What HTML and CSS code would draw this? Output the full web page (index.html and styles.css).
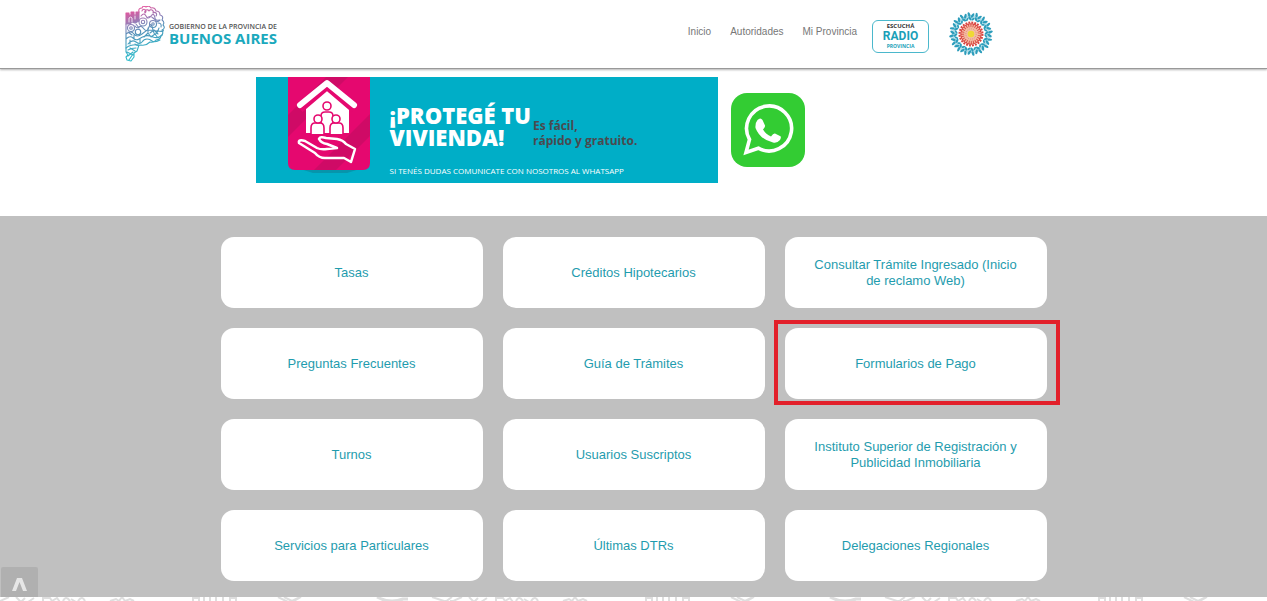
FILE: index.html
```
<!DOCTYPE html>
<html lang="es">
<head>
  <meta charset="UTF-8">
  <meta name="viewport" content="width=device-width, initial-scale=1.0">
  <title>Registro de la Propiedad - Provincia de Buenos Aires</title>
  <link rel="stylesheet" href="styles.css">
</head>
<body>
  <header class="header">
    <div class="header-inner">
      <a class="brand" href="#">
        <svg class="brand-map" width="40" height="56" viewBox="0 0 40 56" fill="none" stroke="url(#brandGrad)" stroke-width="1.1" stroke-linecap="round" stroke-linejoin="round" aria-hidden="true">
          <defs>
            <linearGradient id="brandGrad" gradientUnits="userSpaceOnUse" x1="6" y1="4" x2="20" y2="48">
              <stop offset="0" stop-color="#e5559d"/>
              <stop offset=".3" stop-color="#9180b8"/>
              <stop offset=".5" stop-color="#5490b8"/>
              <stop offset="1" stop-color="#30bccb"/>
            </linearGradient>
          </defs>
          <!-- castle and coast -->
          <path fill="url(#brandGrad)" d="M1 7h3v2h2V6h3v3h2V6h3v9l-4 2-3-1-2 2H1z"/>
          <path stroke="#fff" stroke-width=".8" d="M4 16v-4q2-2 3 0v4M10 10v3"/>
          <path d="M14 6q-1-4 3-4 1-3 4-1 3-2 5 1 4-1 5 3 4 0 4 4 4 1 2 5 3 2 1 5 3 3-1 5 2 4-1 6-1 4-5 4-2 3-6 2-4 4-9 3-5 1-6-1"/>
          <!-- curls -->
          <path d="M17 5a2 2 0 1 1 3 2 2 2 0 1 1 4-2 2 2 0 1 1 4 2 2 2 0 1 1 3 3M16 10q3-4 5 0t5 0 4 2 5 2"/>
          <circle cx="6" cy="22" r="3.5"/><circle cx="6" cy="22" r="1.3"/>
          <circle cx="18" cy="16" r="4"/><circle cx="18" cy="16" r="1.7"/>
          <circle cx="28" cy="18" r="3.5"/><circle cx="28" cy="18" r="1.2"/>
          <circle cx="13" cy="26" r="2.7"/>
          <path d="M1 18v24M1 28q5-4 8 0t8 0 6-4 9 1 6-1M10 20q2 3 4 1t5 2 5-2 4 3 6-2M22 12q3-3 6 0t6 2M33 17q4 0 3 4M1 33q4-4 7-1t6 1 6-3 8 1 9-2M3 38q4-5 8-2t6 0 5-3 5 2 8-1M25 27l4-3 4 4M19 31l4-4 3 4 4-3 3 4M5 34v4M9 29v4M15 33v4M3 26l4 3M11 18l3 4M23 22v4"/>
          <!-- southern tip -->
          <path d="M1 42q5-4 13-3l-2 6-3 2v4l-3 4-4-1-1-3 2-2-2-3zM3 50l5-4M4 54l4-6M5 42l5 3M2 46l6 3M3 44q3-2 8-2"/>
        </svg>
        <span class="brand-text">
          <span class="brand-small">GOBIERNO DE LA PROVINCIA DE</span>
          <span class="brand-big">BUENOS AIRES</span>
        </span>
      </a>
      <nav class="nav">
        <a class="nav-link" href="#">Inicio</a>
        <a class="nav-link" href="#">Autoridades</a>
        <a class="nav-link" href="#">Mi Provincia</a>
        <a class="radio" href="#">
          <span class="radio-top">ESCUCHÁ</span>
          <span class="radio-mid">RADIO</span>
          <span class="radio-bottom">PROVINCIA</span>
        </a>
        <a class="emblem" href="#" aria-label="Escudo">
          <svg width="44" height="44" viewBox="-22 -22 44 44" aria-hidden="true">
            <defs>
              <g id="leaf" fill="#2d9dbb">
                <ellipse cx="-2" cy="-19.500" rx="1.200" ry="2.400" transform="rotate(-20 -2 -19.500)"/>
                <ellipse cx="1.600" cy="-18.500" rx="1.200" ry="2.600" transform="rotate(35 1.600 -18.500)"/>
                <ellipse cx="-1" cy="-15.500" rx="1.100" ry="2.200" transform="rotate(-40 -1 -15.500)"/>
                <ellipse cx="2" cy="-14.800" rx=".9" ry="1.800" transform="rotate(50 2 -14.800)"/>
              </g>
              <g id="leaves">
                <use href="#leaf"/>
                <use href="#leaf" transform="rotate(22.500)"/>
                <use href="#leaf" transform="rotate(45)"/>
                <use href="#leaf" transform="rotate(67.500)"/>
              </g>
            </defs>
            <circle r="17" fill="none" stroke="#b5dfe9" stroke-width="4"/>
            <use href="#leaves"/>
            <use href="#leaves" transform="rotate(90)"/>
            <use href="#leaves" transform="rotate(180)"/>
            <use href="#leaves" transform="rotate(270)"/>
            <circle r="13" fill="#fff"/>
            <circle r="11.500" fill="none" stroke="#d8443f" stroke-width="2" stroke-dasharray="1.900 1.110"/>
            <circle r="10.700" fill="#d8443f"/>
            <circle r="8" fill="none" stroke="#f3b8a0" stroke-width="3.500" stroke-dasharray="1.300 .8"/>
            <circle r="7" fill="#f3bda4"/>
            <circle r="5.200" fill="none" stroke="#e58c74" stroke-width="1" stroke-dasharray="1 1"/>
            <circle r="3.300" fill="#efd934"/>
          </svg>
        </a>
      </nav>
    </div>
  </header>

  <section class="promo">
    <a class="banner" href="#">
      <svg class="banner-icon" width="84" height="97" viewBox="0 0 84 97" aria-hidden="true">
        <path d="M10 91h66l-16 5H26z" fill="#0795ab"/>
        <path d="M1 0h82v86q0 7-7 7H8q-7 0-7-7z" fill="#e5086f"/>
        <path d="M1 38L39 0h22L1 60zM27 93L83 37v22L49 93z" fill="#cf0a66"/>
        <path d="M19 24L40 8l22 16v32H19z" fill="#fff"/>
        <path d="M13 32L40 9l27 23" fill="none" stroke="#e5086f" stroke-width="8"/>
        <path d="M13 28L40 6l27 22" fill="none" stroke="#fff" stroke-width="6" stroke-linecap="round" stroke-linejoin="round"/>
        <g fill="#fff" stroke="#e5086f" stroke-width="1.600">
          <path d="M34 46v-7q0-4 4-4h4q4 0 4 4v7"/>
          <circle cx="40" cy="29" r="4"/>
          <path d="M24 57v-6q0-5 4-5h5q4 0 4 5v6M43 57v-6q0-5 4-5h5q4 0 4 5v6"/>
          <circle cx="31" cy="42" r="4"/>
          <circle cx="49" cy="42" r="4"/>
        </g>
        <path d="M12 66q-1-4 6-2l12 7q4 2 10 1l10-1-10-4q-6-1-8-5 1-3 7-1l11 1q6 1 9 5l9 5-4 13-7-4H38q-6 0-10-5z" fill="none" stroke="#fff" stroke-width="2.500" stroke-linejoin="round"/>
      </svg>
      <span class="banner-main">
        <span class="banner-row">
          <strong class="banner-title">¡PROTEGÉ TU<br>VIVIENDA!</strong>
          <span class="banner-aside">Es fácil,<br>rápido y gratuito.</span>
        </span>
        <span class="banner-note">SI TENÉS DUDAS COMUNICATE CON NOSOTROS AL WHATSAPP</span>
      </span>
    </a>
    <a class="whatsapp" href="#" aria-label="WhatsApp">
      <svg width="74" height="74" viewBox="0 0 74 74" aria-hidden="true">
        <rect width="74" height="74" rx="16" fill="#33cc33"/>
        <path d="M15 59.500l3.500-13a22.500 22.500 0 1 1 8.800 8.700z" fill="none" stroke="#fff" stroke-width="3.600"/>
        <path d="M26.500 27q3-3 5 0l2.500 5.500q.5 1.500-2 4 3 5 8 7 2.500-3.500 4-3l5.500 2.800q1 1-.5 3.700-3 3.500-7 2.500-13-3-17.500-14.500-.5-5 2-8z" fill="#fff"/>
      </svg>
    </a>
  </section>

  <main class="services">
    <div class="grid">
      <a class="tile" href="#">Tasas</a>
      <a class="tile" href="#">Créditos Hipotecarios</a>
      <a class="tile" href="#">Consultar Trámite Ingresado (Inicio de reclamo Web)</a>
      <a class="tile" href="#">Preguntas Frecuentes</a>
      <a class="tile" href="#">Guía de Trámites</a>
      <a class="tile tile-marked" href="#">Formularios de Pago</a>
      <a class="tile" href="#">Turnos</a>
      <a class="tile" href="#">Usuarios Suscriptos</a>
      <a class="tile" href="#">Instituto Superior de Registración y Publicidad Inmobiliaria</a>
      <a class="tile" href="#">Servicios para Particulares</a>
      <a class="tile" href="#">Últimas DTRs</a>
      <a class="tile" href="#">Delegaciones Regionales</a>
    </div>
    <button class="to-top" type="button" aria-label="Subir">
      <svg width="15" height="13" viewBox="0 0 15 13" aria-hidden="true">
        <path d="M0 13L5 0h5l5 13h-4L7.500 4 4 13z" fill="#e6e6e6"/>
      </svg>
    </button>
  </main>

  <footer class="footer">
    <svg class="footer-pattern" width="100%" height="5" aria-hidden="true">
      <defs>
        <pattern id="icons" width="453" height="5" patternUnits="userSpaceOnUse">
          <g fill="none" stroke="#dedede" stroke-width="2">
            <path d="M0 4l9-4M16 0l5 5 4-4M28 5l6-4M43 4V1h7l2 3 5-3 3 4M63 4q3-6 7 0M71 2l5 3M78 4q4-6 7 0"/>
            <path d="M110 4l6-2 3 2 3-4 3 4 5-2 4 2"/>
            <path d="M193 5V0M199 0v5M204 0v5M210 0v5M216 0v5M223 0v5M230 0v5M236 0v5M193 1h6M230 1h6"/>
            <path d="M278 0l10 5M284 0l8 4 8-4M292 5l9-5"/>
            <path d="M377 0q13 7 26 2h5" stroke-width="3"/>
            <path d="M432 0l15 5M445 5l7-5M450 4h3"/>
          </g>
        </pattern>
      </defs>
      <rect width="100%" height="5" fill="url(#icons)"/>
    </svg>
  </footer>
</body>
</html>
```
FILE: styles.css
```
* {
  box-sizing: border-box;
}
body {
  margin: 0;
  min-height: 100vh;
  display: flex;
  flex-direction: column;
  font-family: "Liberation Sans", Arial, sans-serif;
  background: #fff;
}
a {
  text-decoration: none;
}

/* header */
.header {
  border-bottom: 1px solid #999;
  box-shadow: 0 1px 2px rgba(0, 0, 0, 0.3);
}
.header-inner {
  display: flex;
  justify-content: space-between;
  align-items: center;
  max-width: 1017px;
  height: 68px;
  margin: 0 auto;
  padding-right: 149px;
}
.brand {
  display: flex;
  align-items: center;
  gap: 4px;
}
.brand-text {
  display: flex;
  flex-direction: column;
  font-family: "Open Sans", "Noto Sans", sans-serif;
}
.brand-small {
  font-size: 7px;
  font-weight: 600;
  line-height: 8px;
  color: #555;
}
.brand-big {
  font-size: 15px;
  font-weight: 700;
  line-height: 14px;
  color: #1ba9bd;
}
.nav {
  display: flex;
  align-items: center;
}
.nav-link {
  margin-right: 19px;
  padding-bottom: 4px;
  font-size: 10px;
  line-height: 12px;
  color: #777;
}
.radio {
  display: flex;
  flex-direction: column;
  align-items: center;
  width: 57px;
  margin: 4px 20px 0 -4px;
  padding: 2px 0;
  border: 1px solid #4bb8cc;
  border-radius: 6px;
  font-family: "Open Sans", "Noto Sans", sans-serif;
  font-weight: 700;
}
.radio-top {
  font-size: 6px;
  line-height: 7px;
  color: #333;
}
.radio-mid {
  font-family: Roboto, sans-serif;
  font-size: 12px;
  line-height: 13px;
  color: #1a9fb8;
}
.radio-bottom {
  font-size: 5px;
  line-height: 7px;
  color: #1a9fb8;
}
.emblem svg {
  display: block;
}

/* banner */
.promo {
  display: flex;
  align-items: center;
  gap: 13px;
  width: 100%;
  max-width: 826px;
  margin: 0 auto;
  padding: 8px 0 33px 35px;
}
.banner {
  display: flex;
  width: 462px;
  height: 106px;
  padding-left: 31px;
  background: #00aec7;
  color: #fff;
  font-family: "Open Sans", "Noto Sans", sans-serif;
}
.banner-icon {
  flex: none;
}
.banner-main {
  display: flex;
  flex-direction: column;
  justify-content: space-between;
  padding: 27px 0 7px 19px;
  white-space: nowrap;
}
.banner-row {
  display: flex;
  align-items: flex-end;
  gap: 2px;
}
.banner-title {
  font-size: 22px;
  font-weight: 800;
  line-height: 22px;
}
.banner-aside {
  font-size: 12px;
  font-weight: 700;
  line-height: 15px;
  color: #4a4a4f;
}
.banner-note {
  font-size: 8px;
  line-height: 10px;
}
.whatsapp svg {
  display: block;
}

/* services */
.services {
  position: relative;
  padding: 21px 0 16px;
  background: #c0c0c0;
}
.grid {
  display: grid;
  grid-template-columns: repeat(3, 1fr);
  gap: 20px;
  max-width: 826px;
  margin: 0 auto;
}
.tile {
  display: flex;
  align-items: center;
  justify-content: center;
  min-height: 71px;
  padding: 0 24px;
  border-radius: 13px;
  background: #fff;
  color: #1f9cae;
  font-size: 13px;
  line-height: 16px;
  text-align: center;
}
.tile-marked {
  position: relative;
}
.tile-marked::after {
  content: "";
  position: absolute;
  inset: -8px -13px -6px -11px;
  border: 4px solid #e2202a;
}
.to-top {
  position: absolute;
  left: 1px;
  bottom: 0;
  display: flex;
  align-items: center;
  justify-content: center;
  width: 37px;
  height: 30px;
  padding: 4px 0 0;
  border: 0;
  border-radius: 2px 2px 0 0;
  background: #b0b0b0;
  cursor: pointer;
}

/* footer */
.footer {
  flex: 1 0 4px;
  overflow: hidden;
}
.footer-pattern {
  display: block;
}
```
